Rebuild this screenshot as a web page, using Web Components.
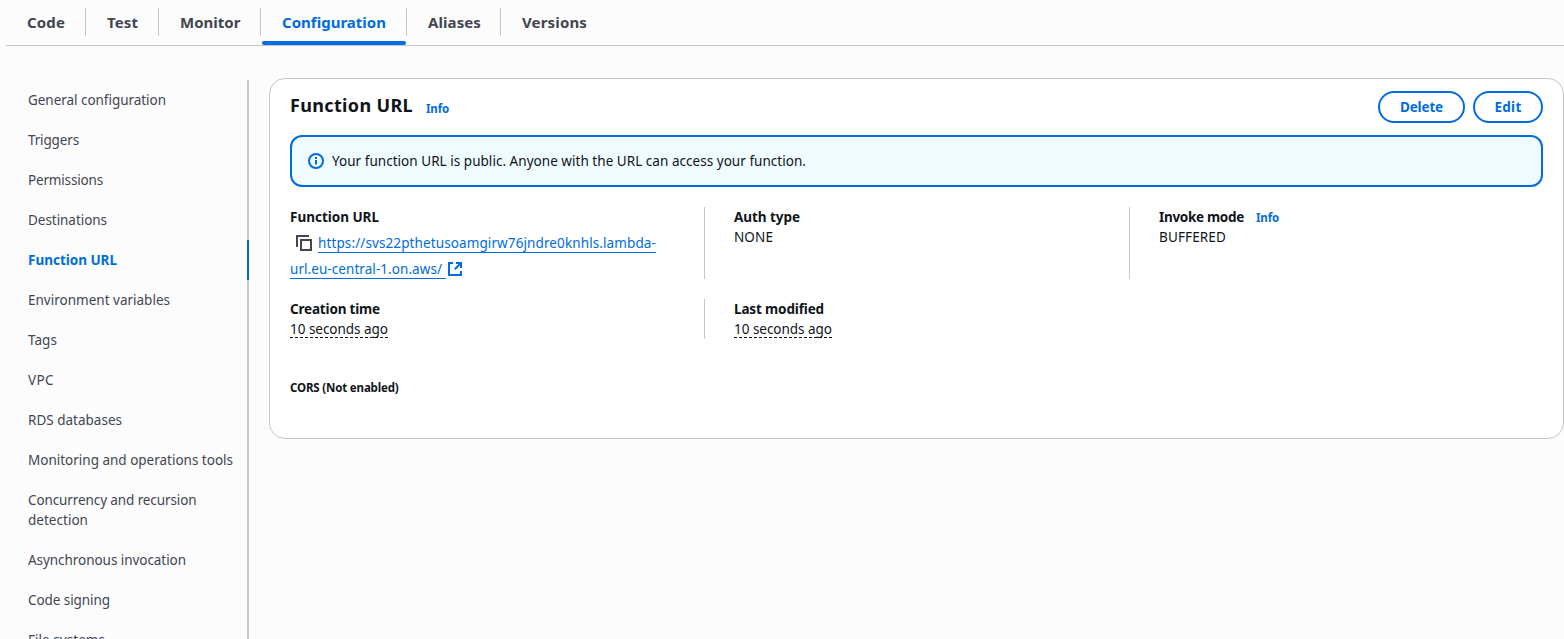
<!DOCTYPE html>
<html lang="en">
<head>
<meta charset="utf-8">
<title>Function URL</title>
<style>
html,body{margin:0;height:639px;overflow:hidden;background:#fcfcfd}
body{font:13.5px/20px "Noto Sans","Open Sans",sans-serif;color:#0f141a}
</style>
</head>
<body>
<lambda-page></lambda-page>
<script>
const define = (name, html, setup) => customElements.define(name, class extends HTMLElement {
  constructor() {
    super();
    const t = document.createElement('template');
    t.innerHTML = html;
    this.attachShadow({mode: 'open'}).append(t.content.cloneNode(true));
  }
  connectedCallback() { if (setup) setup(this); }
});

/* Text run tracked so that it fills the width given by its "w" attribute. */
define('fit-text', `<style>:host{display:inline-block;white-space:nowrap}span{display:inline-block}</style><span><slot></slot></span>`, el => {
  const s = el.shadowRoot.querySelector('span');
  const n = el.textContent.length, w = +el.getAttribute('w');
  el.style.width = w + 'px';
  s.style.letterSpacing = '0px';
  s.style.letterSpacing = (w - s.getBoundingClientRect().width) / n + 'px';
});

define('ui-tab', `<style>
:host{display:flex;box-sizing:border-box;height:45px;padding-top:8px;color:#424650;font-size:15px;font-weight:700;position:relative}
div{box-sizing:border-box;width:100%;height:28px;line-height:28px;padding-left:21px;border-right:1px solid #c6c6cd}
:host([last]) div{border:0}
:host([active]){color:#006ce0}
:host([active])::after{content:"";position:absolute;left:1px;right:1px;bottom:0;height:4px;border-radius:2px;background:#006ce0}
</style><div><slot></slot></div>`);

define('nav-item', `<style>
:host{display:block;padding:10px 0 10px 22px;color:#424650;border-right:2px solid #c6c6cd}
:host([active]){color:#006ce0;font-weight:700;border-color:#006ce0}
</style><slot></slot>`);

define('ui-button', `<style>
:host{display:flex;box-sizing:border-box;height:32px;border:2px solid #006ce0;border-radius:16px;align-items:center;justify-content:center;color:#006ce0;font-weight:700;font-size:13.5px}
</style><slot></slot>`);

define('info-link', `<style>:host{display:inline-block;color:#006ce0;font-size:11.5px;font-weight:700}</style><fit-text w="23">Info</fit-text>`);

define('ui-icon', `<style>:host{display:inline-block;width:16px;height:16px;flex:none}svg{display:block;fill:none;stroke:currentColor;stroke-width:2}</style><svg width="16" height="16" viewBox="0 0 16 16"></svg>`, el => {
  el.shadowRoot.querySelector('svg').innerHTML = {
    info: '<circle cx="8" cy="8" r="7"/><path d="M8 11.5V7M8 6V4"/>',
    copy: '<path d="M15 5H5v10h10V5Z"/><path d="M13 1H1v11"/>',
    external: '<path d="M9 2h5v5M7.8 8.2 14 2"/><path d="M14 10v4H2V2h4"/>'
  }[el.getAttribute('name')];
});

define('ui-alert', `<style>
:host{display:flex;box-sizing:border-box;height:52px;border:2px solid #006ce0;border-radius:12px;background:#f0fbff;align-items:center;gap:8px;padding-left:16px}
ui-icon{color:#006ce0}
</style><ui-icon name="info"></ui-icon><slot></slot>`);

define('key-value', `<style>
:host{display:block;box-sizing:border-box;border-left:1px solid #c6c6cd;padding-left:29px}
:host([first]){border:0;padding:0}
.k{display:flex;height:20px;gap:12px;font-weight:700}
</style><div class="k"><slot name="key"></slot></div><slot></slot>`);

define('relative-time', `<style>:host{display:block;width:98px;height:18px;border-bottom:1px dashed #0f141a}</style><fit-text w="98">10 seconds ago</fit-text>`);

define('function-link', `<style>
:host{display:block;color:#006ce0;padding-top:3px}
div{display:flex;height:26px;align-items:center}
.a{display:block;height:19px;line-height:20px;border-bottom:1px solid #006ce0}
ui-icon[name=copy]{color:#424650;margin:0 6px}
ui-icon[name=external]{margin-left:1px}
.two{padding-right:4px}
</style>
<div><ui-icon name="copy"></ui-icon><span class="a"><fit-text w="338">https://svs22pthetusoamgirw76jndre0knhls.lambda-</fit-text></span></div>
<div><span class="a two"><fit-text w="152">url.eu-central-1.on.aws/</fit-text></span><ui-icon name="external"></ui-icon></div>`);

define('url-card', `<style>
:host{display:block;box-sizing:border-box;height:361px;border:1px solid #c6c6cd;border-radius:16px;background:#fff;padding:12px 20px}
header{display:flex;height:32px;gap:8px}
h2{margin:0;font-size:18px;line-height:29px;font-weight:700;width:123px}
header info-link{margin:8px auto 0 5px}
ui-alert{margin-top:12px}
.grid{display:grid;grid-template-columns:414px 425px 1fr;grid-template-rows:72px 40px;row-gap:20px;margin-top:20px}
h5{margin:39px 0 0;font-size:11.5px;line-height:20px;font-weight:700}
</style>
<header><h2><fit-text w="123">Function URL</fit-text></h2><info-link></info-link>
<ui-button style="width:87px"><fit-text w="43">Delete</fit-text></ui-button><ui-button style="width:70px"><fit-text w="27">Edit</fit-text></ui-button></header>
<ui-alert><fit-text w="474">Your function URL is public. Anyone with the URL can access your function.</fit-text></ui-alert>
<div class="grid">
<key-value first><fit-text slot="key" w="89">Function URL</fit-text><function-link></function-link></key-value>
<key-value><fit-text slot="key" w="66">Auth type</fit-text><fit-text w="39">NONE</fit-text></key-value>
<key-value><fit-text slot="key" w="85">Invoke mode</fit-text><info-link slot="key" style="padding-top:1px"></info-link><fit-text w="67">BUFFERED</fit-text></key-value>
<key-value first><fit-text slot="key" w="90">Creation time</fit-text><relative-time></relative-time></key-value>
<key-value><fit-text slot="key" w="90">Last modified</fit-text><relative-time></relative-time></key-value>
</div>
<h5><fit-text w="108.5">CORS (Not enabled)</fit-text></h5>`);

define('lambda-page', `<style>
:host{display:block;padding-left:6px}
.tabs{display:flex;border-bottom:1px solid #c6c6cd}
.body{display:flex;gap:20px}
nav{width:243px;flex:none;padding-top:34px}
url-card{flex:1;margin-top:32px}
</style>
<div class="tabs">
<ui-tab style="width:80px"><fit-text w="38">Code</fit-text></ui-tab>
<ui-tab style="width:73px"><fit-text w="31">Test</fit-text></ui-tab>
<ui-tab style="width:102px"><fit-text w="60.5">Monitor</fit-text></ui-tab>
<ui-tab style="width:146px" active><fit-text w="104">Configuration</fit-text></ui-tab>
<ui-tab style="width:94px"><fit-text w="53">Aliases</fit-text></ui-tab>
<ui-tab style="width:106px" last><fit-text w="65">Versions</fit-text></ui-tab>
</div>
<div class="body"><nav>
<nav-item><fit-text w="138">General configuration</fit-text></nav-item>
<nav-item><fit-text w="51">Triggers</fit-text></nav-item>
<nav-item><fit-text w="75">Permissions</fit-text></nav-item>
<nav-item><fit-text w="79">Destinations</fit-text></nav-item>
<nav-item active><fit-text w="89">Function URL</fit-text></nav-item>
<nav-item><fit-text w="142">Environment variables</fit-text></nav-item>
<nav-item><fit-text w="29">Tags</fit-text></nav-item>
<nav-item><fit-text w="26">VPC</fit-text></nav-item>
<nav-item><fit-text w="94">RDS databases</fit-text></nav-item>
<nav-item><fit-text w="205">Monitoring and operations tools</fit-text></nav-item>
<nav-item><fit-text w="168.5">Concurrency and recursion</fit-text><br><fit-text w="60">detection</fit-text></nav-item>
<nav-item><fit-text w="158">Asynchronous invocation</fit-text></nav-item>
<nav-item><fit-text w="82">Code signing</fit-text></nav-item>
<nav-item><fit-text w="77">File systems</fit-text></nav-item>
</nav><url-card></url-card></div>`);
</script>
</body>
</html>
